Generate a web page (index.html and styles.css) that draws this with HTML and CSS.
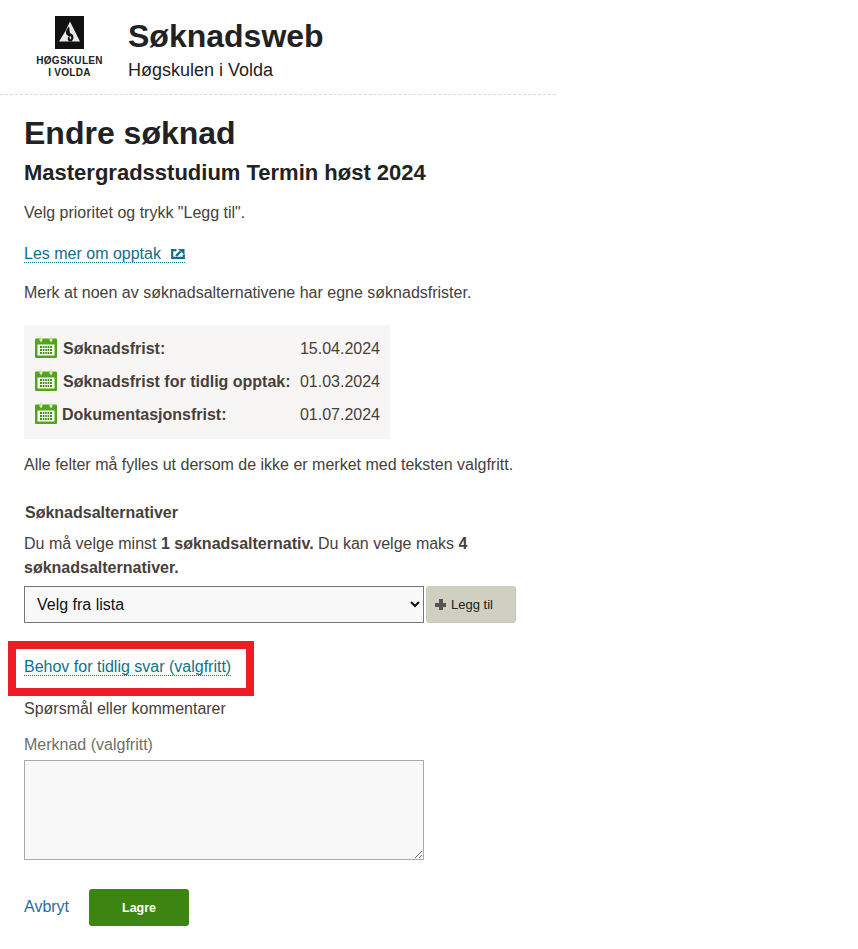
FILE: index.html
```html
<!DOCTYPE html>
<html lang="nn">
<head>
    <meta charset="UTF-8">
    <meta name="viewport" content="width=device-width, initial-scale=1.0">
    <title>Søknadsweb</title>
    <link rel="stylesheet" href="styles.css">
</head>
<body>
    <svg class="sprites" width="0" height="0">
        <symbol id="cal" viewBox="0 0 22 22">
            <rect x="0" y="2.5" width="22" height="19.5" rx="1" fill="#52a41c"/>
            <rect x="2.5" y="8.5" width="17" height="11" fill="#fbfdf6"/>
            <path d="M5.3 0h1.4v3.2H8L6 6.4 4 3.2h1.3zM15.3 0h1.4v3.2H18l-2 3.2-2-3.2h1.3z" fill="#d8ecc0"/>
            <path d="M5 10h12v2H5zM5 13h12v2H5zM5 16h12v2H5z" fill="#3f9012"/>
            <path d="M7.4 10v8M9.8 10v8M12.2 10v8M14.6 10v8" stroke="#fbfdf6" stroke-width=".8"/>
        </symbol>
    </svg>

    <header class="site-header">
        <div class="logo">
            <svg class="logo-mark" viewBox="0 0 29 33" width="29" height="33">
                <rect width="29" height="33" fill="#111"/>
                <path d="M4 25.5 L10.5 15 L15 5.5 L18 11.5 L25 25.5 Z" fill="#e8e8e8"/>
                <path d="M14 10.5 C9 16 11 19 14 20.5 C12 22 12.5 24.5 14.5 25.5 L16.5 25.5 C20 22.5 18.5 18 15.5 17.5 C14 16 15 13.5 14 10.5 Z" fill="#111"/>
                <path d="M15 20 C16.5 20.5 16.5 22.5 15.5 23.5 C14.5 23 14.2 21 15 20 Z" fill="#e8e8e8"/>
            </svg>
            <div class="logo-text">HØGSKULEN<br>I VOLDA</div>
        </div>
        <div class="titles">
            <div class="site-title">Søknadsweb</div>
            <div class="site-sub">Høgskulen i Volda</div>
        </div>
    </header>

    <main class="content">
        <h1>Endre søknad</h1>
        <h2>Mastergradsstudium Termin høst 2024</h2>
        <p class="intro">Velg prioritet og trykk "Legg til".</p>
        <p class="more">
            <a class="link" href="#">Les mer om opptak
                <svg class="ext" viewBox="0 0 14 10" width="14" height="10">
                    <path d="M5.5 1.2H1.2V8.8H12.8V5.5" fill="none" stroke="#0f6f8c" stroke-width="2.2"/>
                    <path d="M5 7 L9.5 2.5" stroke="#0f6f8c" stroke-width="2.4"/>
                    <path d="M7 0H13.5V5.8Z" fill="#0f6f8c"/>
                </svg>
            </a>
        </p>
        <p class="note">Merk at noen av søknadsalternativene har egne søknadsfrister.</p>

        <div class="dates">
            <svg class="cal"><use href="#cal"/></svg>
            <b>Søknadsfrist:</b>
            <span>15.04.2024</span>
            <svg class="cal"><use href="#cal"/></svg>
            <b>Søknadsfrist for tidlig opptak:</b>
            <span>01.03.2024</span>
            <svg class="cal"><use href="#cal"/></svg>
            <b class="tight">Dokumentasjonsfrist:</b>
            <span>01.07.2024</span>
        </div>

        <p class="required">Alle felter må fylles ut dersom de ikke er merket med teksten valgfritt.</p>

        <div class="alt-head">Søknadsalternativer</div>
        <p class="alt-text">Du må velge minst <b>1 søknadsalternativ.</b> Du kan velge maks <b>4 søknadsalternativer.</b></p>

        <div class="picker">
            <select class="select">
                <option>Velg fra lista</option>
            </select>
            <button class="add" type="button"><span class="plus"></span>Legg til</button>
        </div>

        <div class="marked">
            <a class="link" href="#">Behov for tidlig svar (valgfritt)</a>
        </div>

        <div class="question">Spørsmål eller kommentarer</div>
        <label class="field-label" for="merknad">Merknad (valgfritt)</label>
        <textarea class="comment" id="merknad"></textarea>

        <div class="actions">
            <a class="cancel" href="#">Avbryt</a>
            <button class="save" type="button">Lagre</button>
        </div>
    </main>
</body>
</html>
```

FILE: styles.css
```css
body {
    margin: 0;
    padding: 0;
    background: #fff;
    color: #46403c;
    font-family: "Liberation Sans", Arial, sans-serif;
    font-size: 16px;
    line-height: 24px;
}

.sprites {
    display: block;
    height: 0;
}

.site-header {
    width: 556px;
    height: 95px;
    box-sizing: border-box;
    border-bottom: 1px dashed #d8d8de;
    padding: 16px 0 0 24px;
    display: flex;
}

.logo {
    width: 91px;
    height: 65px;
    background: #fefefe;
    display: flex;
    flex-direction: column;
    align-items: center;
}

.logo-mark {
    display: block;
}

.logo-text {
    margin-top: 6px;
    font-size: 10px;
    line-height: 12px;
    font-weight: 700;
    letter-spacing: 0.3px;
    text-align: center;
    color: #222;
}

.titles {
    margin-left: 13px;
    color: #222;
}

.site-title {
    font-size: 32px;
    font-weight: 700;
    line-height: 40px;
}

.site-sub {
    font-size: 18px;
    line-height: 26px;
    margin-top: 1px;
}

.content {
    padding-left: 24px;
    width: 500px;
}

h1 {
    margin: 20px 0 0;
    font-size: 32px;
    line-height: 36px;
    color: #222;
}

h2 {
    margin: 8px 0 0;
    font-size: 22px;
    line-height: 28px;
    color: #222;
}

p {
    margin: 0;
}

.intro { margin-top: 14px; }
.more { margin-top: 17px; }
.note { margin-top: 15px; }

.link {
    color: #0f6f8c;
    text-decoration: none;
    border-bottom: 1px dotted #0f6f8c;
}

.ext {
    margin-left: 6px;
}

.dates {
    margin-top: 20px;
    width: 366px;
    height: 114px;
    box-sizing: border-box;
    padding: 7px 10px 7px 11px;
    background: #f8f6f4;
    display: grid;
    grid-template-columns: 22px 1fr auto;
    grid-auto-rows: 33px;
    align-items: center;
    column-gap: 6px;
}

.cal {
    width: 22px;
    height: 22px;
    margin-top: -4px;
}

.tight {
    margin-left: -1px;
}

.required { margin-top: 14px; }

.alt-head {
    margin: 24px 0 0 1px;
    font-weight: 700;
}

.alt-text { margin-top: 7px; }

.picker {
    margin-top: 6px;
    display: flex;
    gap: 2px;
}

.select {
    width: 400px;
    height: 37px;
    padding-left: 8px;
    border: 1px solid #767676;
    border-radius: 0;
    background: #f8f8f8;
    color: #111;
    font-family: inherit;
    font-size: 16px;
}

.add {
    width: 90px;
    height: 37px;
    padding: 0 0 0 8px;
    border: 1px solid #c8c8b8;
    border-radius: 3px;
    background: #d0d0c2;
    color: #222;
    font-family: inherit;
    font-size: 13px;
    display: flex;
    align-items: center;
}

.plus {
    width: 11px;
    height: 11px;
    margin-right: 5px;
    background:
        linear-gradient(#555, #555) center / 11px 4px no-repeat,
        linear-gradient(#555, #555) center / 4px 11px no-repeat;
}

/* red marker around the link */
.marked {
    margin: 18px 0 0 -16px;
    width: 246px;
    height: 55px;
    box-sizing: border-box;
    border: 8px solid #ee1c25;
    padding: 6px 0 0 8px;
}

.question {
    margin-top: 1px;
}

.field-label {
    display: block;
    margin-top: 12px;
    color: #6f6f68;
}

.comment {
    display: block;
    margin: 3px 0 0;
    width: 400px;
    height: 100px;
    box-sizing: border-box;
    border: 1px solid #aaa;
    background: #f8f8f8;
}

.actions {
    margin-top: 29px;
    display: flex;
    align-items: center;
}

.cancel {
    color: #1f6f95;
    text-decoration: none;
    margin: -2px 20px 0 0;
}

.save {
    width: 100px;
    height: 37px;
    border: 0;
    border-radius: 3px;
    background: #3d8511;
    color: #fff;
    font-family: inherit;
    font-size: 12.5px;
    font-weight: 700;
}
```
